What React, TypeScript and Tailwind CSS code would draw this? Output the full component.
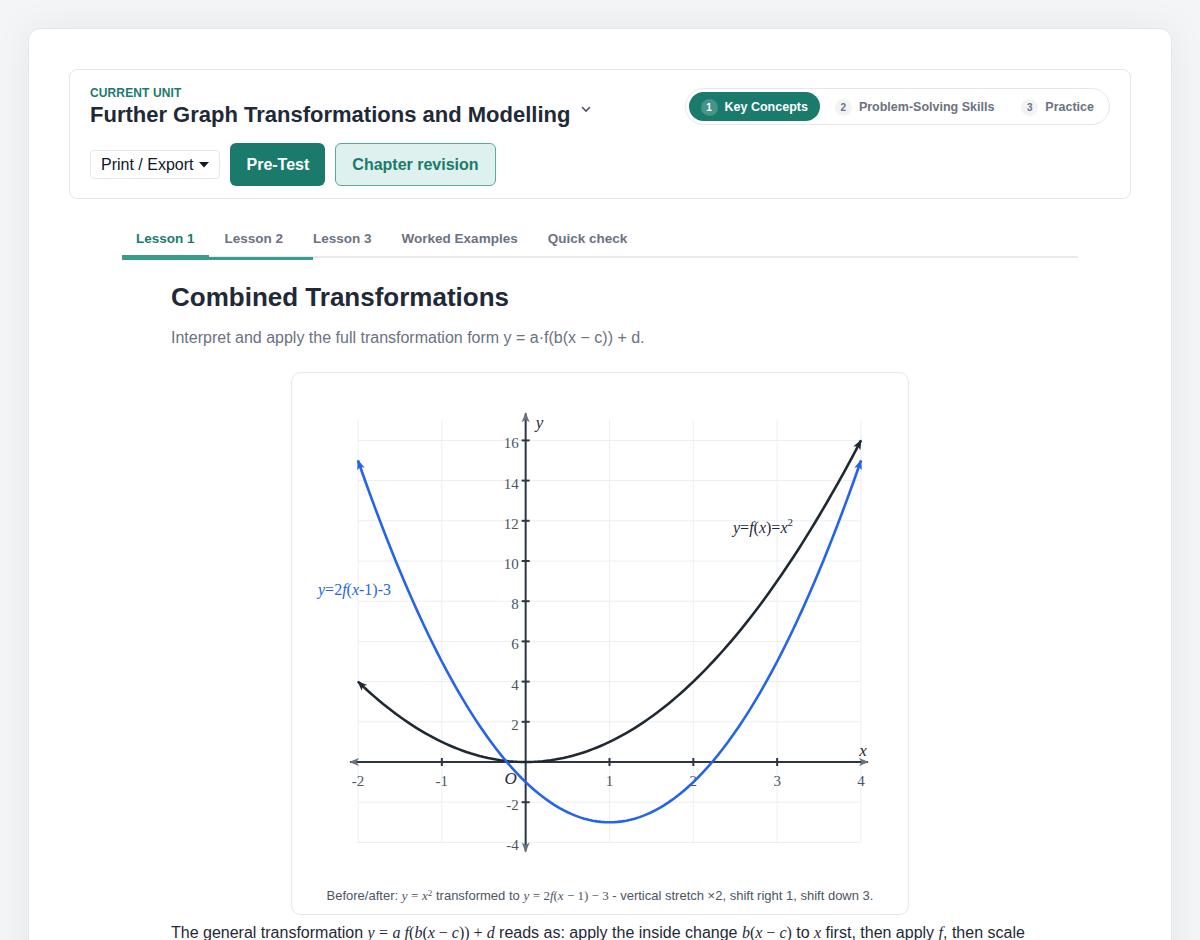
import type { ReactNode } from 'react';

// ---------------------------------------------------------------------------
// Graph geometry (svg-local pixels)
// ---------------------------------------------------------------------------

const UX = 83.83;
const UY = 20.1;
const X = (x: number) => 66 + (x + 2) * UX;
const Y = (y: number) => 389 - y * UY;

function curve(f: (x: number) => number) {
  const pts: string[] = [];
  for (let i = 0; i <= 120; i++) {
    const x = -2 + (6 * i) / 120;
    pts.push(`${i === 0 ? 'M' : 'L'}${X(x).toFixed(2)},${Y(f(x)).toFixed(2)}`);
  }
  return pts.join(' ');
}

const serif = "font-['Liberation_Serif','Times_New_Roman',serif]";

function M({ children }: { children: ReactNode }) {
  return <span className={`${serif} italic`}>{children}</span>;
}

function Graph() {
  const xs = [-2, -1, 0, 1, 2, 3, 4];
  const ys = [-4, -2, 0, 2, 4, 6, 8, 10, 12, 14, 16];
  const ticksY = [-2, 2, 4, 6, 8, 10, 12, 14, 16];
  const ticksX = [-1, 1, 2, 3];

  return (
    <svg width={616} height={500} viewBox="0 0 616 500" className="block">
      <defs>
        {[
          ['arBlack', '#1f2933'],
          ['arBlue', '#2563eb'],
          ['arGray', '#6b7280'],
        ].map(([id, c]) => (
          <marker
            key={id}
            id={id}
            markerWidth={12}
            markerHeight={12}
            refX={9}
            refY={5}
            orient="auto-start-reverse"
            markerUnits="userSpaceOnUse"
          >
            <path d="M0,1 L10,5 L0,9 L2.5,5 z" fill={c} />
          </marker>
        ))}
      </defs>

      {/* grid */}
      <g stroke="#eceef0" strokeWidth={1}>
        {xs.map((x) => (
          <line key={`gx${x}`} x1={X(x)} x2={X(x)} y1={Y(17)} y2={Y(-4)} />
        ))}
        {ys.map((y) => (
          <line key={`gy${y}`} x1={X(-2)} x2={X(4)} y1={Y(y)} y2={Y(y)} />
        ))}
      </g>

      {/* axes */}
      <g stroke="#2d3640" strokeWidth={2}>
        <line x1={X(0)} x2={X(0)} y1={Y(-4) + 9} y2={Y(17) - 7} markerStart="url(#arGray)" markerEnd="url(#arGray)" />
        <line x1={X(-2) - 8} x2={X(4) + 7} y1={Y(0)} y2={Y(0)} markerStart="url(#arGray)" markerEnd="url(#arGray)" />
        {ticksY.map((y) => (
          <line key={`ty${y}`} x1={X(0) - 4} x2={X(0) + 4} y1={Y(y)} y2={Y(y)} />
        ))}
        {ticksX.map((x) => (
          <line key={`tx${x}`} x1={X(x)} x2={X(x)} y1={Y(0) - 4} y2={Y(0) + 4} />
        ))}
      </g>

      {/* tick labels */}
      <g fill="#4b5563" fontFamily="'Liberation Serif', 'Times New Roman', serif" fontSize={15}>
        {ys
          .filter((y) => y !== 0)
          .map((y) => (
            <text key={`ly${y}`} x={X(0) - 7} y={Y(y) + 8} textAnchor="end">
              {y}
            </text>
          ))}
        {xs
          .filter((x) => x !== 0)
          .map((x) => (
            <text key={`lx${x}`} x={X(x)} y={Y(0) + 24} textAnchor="middle">
              {x}
            </text>
          ))}
        <text x={X(0) - 9} y={Y(0) + 22} textAnchor="end" fontStyle="italic" fontSize={17} fill="#1f2937">
          O
        </text>
        <text x={X(4) + 2} y={Y(0) - 6} textAnchor="middle" fontStyle="italic" fontSize={17} fill="#1f2937">
          x
        </text>
        <text x={X(0) + 10} y={Y(17) + 8} fontStyle="italic" fontSize={17} fill="#1f2937">
          y
        </text>
      </g>

      {/* curves */}
      <path
        d={curve((x) => x * x)}
        fill="none"
        stroke="#1f2933"
        strokeWidth={2.6}
        markerStart="url(#arBlack)"
        markerEnd="url(#arBlack)"
      />
      <path
        d={curve((x) => 2 * (x - 1) * (x - 1) - 3)}
        fill="none"
        stroke="#2563eb"
        strokeWidth={2.6}
        markerStart="url(#arBlue)"
        markerEnd="url(#arBlue)"
      />

      {/* curve labels */}
      <text x={441} y={160} fontFamily="'Liberation Serif', 'Times New Roman', serif" fontSize={16} fill="#1f2937">
        <tspan fontStyle="italic">y</tspan>=<tspan fontStyle="italic">f</tspan>(<tspan fontStyle="italic">x</tspan>)=
        <tspan fontStyle="italic">x</tspan>
        <tspan fontSize={11} dy={-7}>2</tspan>
      </text>
      <text x={26} y={222} fontFamily="'Liberation Serif', 'Times New Roman', serif" fontSize={16} fill="#2563eb">
        <tspan fontStyle="italic">y</tspan>=2<tspan fontStyle="italic">f</tspan>(<tspan fontStyle="italic">x</tspan>-1)-3
      </text>
    </svg>
  );
}

// ---------------------------------------------------------------------------
// Header pieces
// ---------------------------------------------------------------------------

const steps = ['Key Concepts', 'Problem-Solving Skills', 'Practice'];
const tabs = ['Lesson 1', 'Lesson 2', 'Lesson 3', 'Worked Examples', 'Quick check'];

function StepPills() {
  return (
    <div className="mt-[3px] flex items-center gap-[3px] rounded-full border border-[#e5e7eb] bg-white p-[3px]">
      {steps.map((s, i) => {
        const active = i === 0;
        return (
          <div
            key={s}
            className={`flex h-[29px] items-center gap-[7px] rounded-full px-3 pt-px text-[12.5px] font-bold ${
              active ? 'bg-[#1a7a6c] text-white' : 'text-[#6b7280]'
            }`}
          >
            <span
              className={`flex h-[17px] w-[17px] items-center justify-center rounded-full text-[10px] ${
                active ? 'bg-white/20 text-white' : 'bg-[#f1f3f5] text-[#6b7280]'
              }`}
            >
              {i + 1}
            </span>
            {s}
          </div>
        );
      })}
    </div>
  );
}

function UnitHeader() {
  return (
    <div className="flex items-start justify-between rounded-lg border border-[#e5e7eb] bg-white pl-5 pr-5 pt-[15px] pb-3">
      <div>
        <div className="text-[12px] font-bold uppercase leading-4 tracking-[0.01em] text-[#1a7a6c]">Current unit</div>
        <div className="flex items-start gap-3">
          <h1 className="text-[22px] font-bold leading-7 text-[#1f2937]">Further Graph Transformations and Modelling</h1>
          <svg width="12" height="12" viewBox="0 0 12 12" className="mt-[2px] -ml-[2px]">
            <path d="M2.5 4.5 L6 8 L9.5 4.5" fill="none" stroke="#4b5563" strokeWidth="1.6" strokeLinecap="round" />
          </svg>
        </div>
        <div className="mt-[14px] flex items-center gap-[10px]">
          <button className="flex h-[29px] items-center gap-[6px] rounded border border-[#e5e7eb] bg-white px-[10px] text-[16px] text-[#111827]">
            Print / Export
            <svg width="10" height="6" viewBox="0 0 10 6">
              <path d="M0 0 L10 0 L5 5.5 z" fill="#111827" />
            </svg>
          </button>
          <button className="h-[43px] rounded-md bg-[#1a7a6c] px-4 text-[16px] font-bold text-white">Pre-Test</button>
          <button className="h-[43px] rounded-md border border-[#5aa999] bg-[#def1ee] px-4 text-[16px] font-bold text-[#1a7a6c]">
            Chapter revision
          </button>
        </div>
      </div>
      <StepPills />
    </div>
  );
}

function LessonTabs() {
  return (
    <div className="relative flex gap-[2px] border-b-2 border-[#e7e9ec]">
      {tabs.map((t, i) => (
        <div
          key={t}
          className={`-mb-[2px] border-b-[3px] px-[14px] pt-2 pb-2 text-[13.5px] font-bold leading-4 ${
            i === 0 ? 'border-[#3a9d8c] text-[#1a7a6c]' : 'border-transparent text-[#6b7280]'
          }`}
        >
          {t}
        </div>
      ))}
      <div className="absolute -bottom-[4px] left-0 h-[3px] w-[191px] bg-[#3a9d8c]" />
    </div>
  );
}

// ---------------------------------------------------------------------------
// Page
// ---------------------------------------------------------------------------

export default function App() {
  return (
    <div className="h-[940px] overflow-hidden bg-[#f4f5f6] px-7 pt-7 font-['Liberation_Sans',Arial,sans-serif]">
      <div className="h-[960px] rounded-xl border border-[#e5e7eb] bg-white px-10 pt-10 shadow-[0_0_40px_rgba(0,0,0,0.06)]">
        <UnitHeader />

        <div className="mx-[53px] mt-6">
          <LessonTabs />

          <div className="px-[49px]">
            <h2 className="mt-[23px] text-[26px] font-bold leading-8 text-[#1f2937]">Combined Transformations</h2>
            <p className="mt-[13px] text-[16px] leading-6 text-[#6b7280]">
              Interpret and apply the full transformation form y = a·f(b(x − c)) + d.
            </p>

            <figure className="mx-auto mt-[22px] w-[618px] rounded-[10px] border border-[#e5e7eb] bg-white pb-[10px]">
              <Graph />
              <figcaption className="mt-[15px] text-center text-[13px] leading-4 text-[#4b5563]">
                Before/after: <M>y</M> <span className={serif}>=</span> <M>x</M>
                <sup className={`${serif} text-[9px]`}>2</sup> transformed to <M>y</M>{' '}
                <span className={serif}>= 2</span>
                <M>f</M>
                <span className={serif}>(</span>
                <M>x</M>
                <span className={serif}> − 1) − 3</span> - vertical stretch ×2, shift right 1, shift down 3.
              </figcaption>
            </figure>

            <p className="mt-[6px] text-[16px] leading-6 text-[#1f2937]">
              The general transformation <M>y</M> <span className={serif}>=</span> <M>a f</M>
              <span className={serif}>(</span>
              <M>b</M>
              <span className={serif}>(</span>
              <M>x</M>
              <span className={serif}> − </span>
              <M>c</M>
              <span className={serif}>)) + </span>
              <M>d</M> reads as: apply the inside change <M>b</M>
              <span className={serif}>(</span>
              <M>x</M>
              <span className={serif}> − </span>
              <M>c</M>
              <span className={serif}>)</span> to <M>x</M> first, then apply <M>f</M>, then scale vertically by{' '}
              <M>a</M> and finally shift by <M>d</M>.
            </p>
          </div>
        </div>
      </div>
    </div>
  );
}
